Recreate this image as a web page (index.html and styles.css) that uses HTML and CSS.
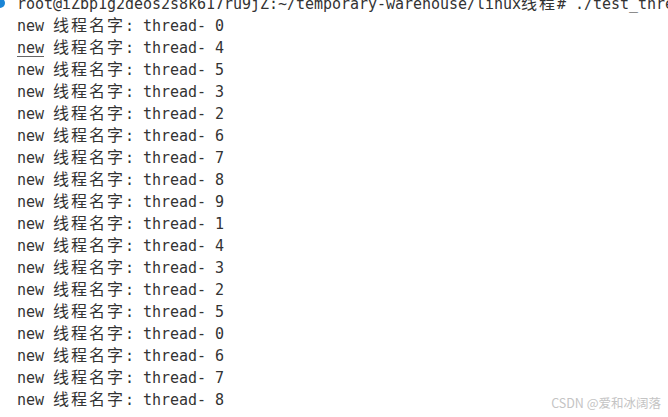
FILE: index.html
```html
<!DOCTYPE html>
<html lang="zh">
<head>
<meta charset="utf-8">
<title>terminal</title>
<link rel="stylesheet" href="styles.css">
</head>
<body>
<span class="mark"></span>
<div class="term">
<div class="line">root@iZbp1g2deos2s8k617ru9jZ:~/temporary-warehouse/linux<span class="cjk">线程</span># ./test_thread</div>
<div class="line">new <span class="cjk">线程名字</span>: thread- 0</div>
<div class="line"><span class="ul">new</span> <span class="cjk">线程名字</span>: thread- 4</div>
<div class="line">new <span class="cjk">线程名字</span>: thread- 5</div>
<div class="line">new <span class="cjk">线程名字</span>: thread- 3</div>
<div class="line">new <span class="cjk">线程名字</span>: thread- 2</div>
<div class="line">new <span class="cjk">线程名字</span>: thread- 6</div>
<div class="line">new <span class="cjk">线程名字</span>: thread- 7</div>
<div class="line">new <span class="cjk">线程名字</span>: thread- 8</div>
<div class="line">new <span class="cjk">线程名字</span>: thread- 9</div>
<div class="line">new <span class="cjk">线程名字</span>: thread- 1</div>
<div class="line">new <span class="cjk">线程名字</span>: thread- 4</div>
<div class="line">new <span class="cjk">线程名字</span>: thread- 3</div>
<div class="line">new <span class="cjk">线程名字</span>: thread- 2</div>
<div class="line">new <span class="cjk">线程名字</span>: thread- 5</div>
<div class="line">new <span class="cjk">线程名字</span>: thread- 0</div>
<div class="line">new <span class="cjk">线程名字</span>: thread- 6</div>
<div class="line">new <span class="cjk">线程名字</span>: thread- 7</div>
<div class="line">new <span class="cjk">线程名字</span>: thread- 8</div>
</div>
<div class="wm">CSDN @爱和冰阔落</div>
</body>
</html>
```
FILE: styles.css
```css
html, body {
  margin: 0;
  padding: 0;
  background: #ffffff;
  width: 668px;
  height: 417px;
  overflow: hidden;
  position: relative;
}
.term {
  margin-top: -9px;
  padding-left: 17px;
  font-family: "DejaVu Sans Mono", "Liberation Mono", "Noto Sans CJK SC", monospace;
  font-size: 15px;
  letter-spacing: -0.03px;
  line-height: 22px;
  color: #333333;
}
.line {
  white-space: pre;
  height: 22px;
  overflow: visible;
}
.cjk {
  font-family: "Noto Sans CJK SC", sans-serif;
  font-size: 16px;
  letter-spacing: 2px;
  line-height: 22px;
}
.ul {
  text-decoration: underline;
  text-decoration-color: #666666;
  text-underline-offset: 3px;
  text-decoration-thickness: 1px;
}
.mark {
  position: absolute;
  left: -5px;
  top: -2px;
  width: 10px;
  height: 10px;
  border-radius: 50%;
  background: #1a85d6;
}
.wm {
  position: absolute;
  right: 7px;
  bottom: 6px;
  font-family: "Noto Sans CJK SC", sans-serif;
  font-size: 12.5px;
  line-height: 16px;
  color: #c4c4c4;
}
```
